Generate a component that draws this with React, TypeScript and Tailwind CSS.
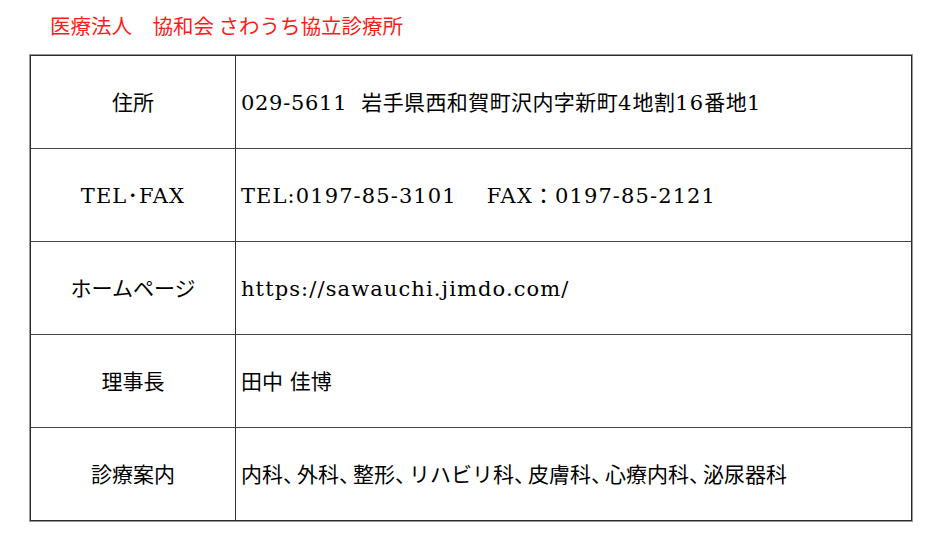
import type { ReactNode } from 'react';

const Comma = () => <span className="tracking-[-7px]">、</span>;
const Lat = ({ children }: { children: ReactNode }) => (
  <span className="tracking-[1.1px]">{children}</span>
);

const rows: { label: ReactNode; value: ReactNode }[] = [
  {
    label: '住所',
    value: (
      <>
        <span className="tracking-[0.7px]">029-5611</span>
        <span className="inline-block w-[14px]" />
        <span className="tracking-[0.4px]">
          岩手県西和賀町沢内字新町<Lat>4</Lat>地割<Lat>16</Lat>番地<Lat>1</Lat>
        </span>
      </>
    ),
  },
  {
    label: <Lat>TEL･FAX</Lat>,
    value: (
      <>
        <Lat>TEL:0197-85-3101</Lat>
        <span className="inline-block w-[30px]" />
        <Lat>FAX：0197-85-2121</Lat>
      </>
    ),
  },
  { label: 'ホームページ', value: <Lat>https://sawauchi.jimdo.com/</Lat> },
  { label: '理事長', value: '田中 佳博' },
  {
    label: '診療案内',
    value: (
      <>
        内科<Comma />外科<Comma />整形<Comma />リハビリ科<Comma />皮膚科<Comma />心療内科<Comma />泌尿器科
      </>
    ),
  },
];

export default function App() {
  return (
    <div
      className="h-[550px] w-[950px] bg-white text-black"
      style={{ fontFamily: '"DejaVu Serif", "Noto Sans CJK JP", serif' }}
    >
      <div
        className="pl-[50px] pt-[11px] text-[20.5px] leading-[28px] text-[#ff1a1a]"
        style={{ fontFamily: '"Noto Sans CJK JP", sans-serif' }}
      >
        医療法人　協和会 さわうち協立診療所
      </div>
      <div className="ml-[29px] mt-[15px] w-[884px] border border-[#9a9a9a]">
        <div className="border border-[#2a2a2a]">
          {rows.map((r, i) => (
            <div
              key={i}
              className={`grid grid-cols-[205px_1fr] ${i > 0 ? 'h-[93px] border-t border-[#444]' : 'h-[92px]'}`}
            >
              <div className="flex items-center justify-center border-r border-[#333] pt-[3px] text-[21px]">
                {r.label}
              </div>
              <div className="flex items-center pl-[5px] pt-[3px] text-[21px]">{r.value}</div>
            </div>
          ))}
        </div>
      </div>
    </div>
  );
}
